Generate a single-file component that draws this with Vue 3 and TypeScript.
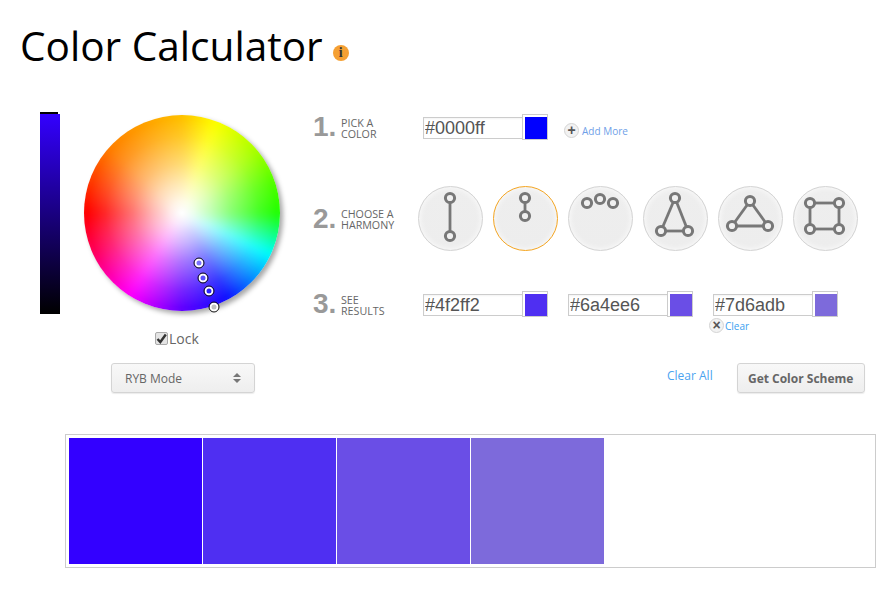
<script setup lang="ts">
interface Node { x: number; y: number }
interface Harmony { name: string; nodes: Node[]; lines: [number, number][] }

const harmonies: Harmony[] = [
  { name: 'complement', nodes: [{ x: 32, y: 12 }, { x: 32, y: 50 }], lines: [[0, 1]] },
  { name: 'monochrome', nodes: [{ x: 32, y: 12 }, { x: 32, y: 30 }], lines: [[0, 1]] },
  { name: 'analogous', nodes: [{ x: 19, y: 17 }, { x: 32, y: 13 }, { x: 45, y: 17 }], lines: [] },
  { name: 'split', nodes: [{ x: 32, y: 12 }, { x: 18, y: 45 }, { x: 45, y: 45 }], lines: [[0, 1], [1, 2], [2, 0]] },
  { name: 'triad', nodes: [{ x: 32, y: 15 }, { x: 14, y: 40 }, { x: 50, y: 40 }], lines: [[0, 1], [1, 2], [2, 0]] },
  { name: 'tetrad', nodes: [{ x: 17, y: 17 }, { x: 46, y: 17 }, { x: 46, y: 43 }, { x: 17, y: 43 }], lines: [[0, 1], [1, 2], [2, 3], [3, 0]] },
]

const results = ['#4f2ff2', '#6a4ee6', '#7d6adb']
const strip = ['#3300ff', '#4f2ff2', '#6a4ee6', '#7d6adb']

const markers = [
  { x: 115, y: 148, inner: '#7a70ff' },
  { x: 119, y: 163, inner: '#5a50ff' },
  { x: 125, y: 176, inner: '#2a20ff' },
  { x: 130, y: 192, inner: '#c0c0c0' },
]
</script>

<template>
  <div class="page">
    <header class="head">
      <h1>Color Calculator</h1>
      <span class="info">i</span>
    </header>

    <section class="tool">
      <div class="left">
        <div class="picker">
          <div class="slider"></div>
          <div class="wheel">
            <div class="face"></div>
            <span
              v-for="m in markers"
              :key="m.y"
              class="marker"
              :style="{ left: m.x + 'px', top: m.y + 'px', background: m.inner }"
            ></span>
          </div>
        </div>
        <div class="lock">
          <span class="check">
            <svg width="11" height="11" viewBox="0 0 11 11"><path d="M1.5 6 L4.3 9 L9.8 1.5" fill="none" stroke="#333" stroke-width="2.4" /></svg>
          </span>
          <span>Lock</span>
        </div>
        <div class="mode">
          <span>RYB Mode</span>
          <svg width="8" height="10" viewBox="0 0 8 10"><path d="M4 0 L8 4 H0 Z M0 6 H8 L4 10 Z" fill="#777" /></svg>
        </div>
      </div>

      <div class="right">
        <div class="step step-one">
          <div class="step-title"><b>1.</b><span>PICK A<br />COLOR</span></div>
          <div class="color-field">
            <input class="hex" value="#0000ff" />
            <span class="chip"><i style="background: #0000ff"></i></span>
          </div>
          <a class="add"><span class="round">+</span>Add More</a>
        </div>

        <div class="step step-two">
          <div class="step-title"><b>2.</b><span>CHOOSE A<br />HARMONY</span></div>
          <div class="harmonies">
            <button
              v-for="(h, i) in harmonies"
              :key="h.name"
              class="harmony"
              :class="{ selected: i === 1 }"
            >
              <svg width="63" height="63" viewBox="1 1 63 63">
                <line
                  v-for="(l, n) in h.lines"
                  :key="n"
                  :x1="h.nodes[l[0]].x"
                  :y1="h.nodes[l[0]].y"
                  :x2="h.nodes[l[1]].x"
                  :y2="h.nodes[l[1]].y"
                  stroke="#777"
                  stroke-width="2.8"
                />
                <circle
                  v-for="(c, n) in h.nodes"
                  :key="n"
                  :cx="c.x"
                  :cy="c.y"
                  r="4.6"
                  fill="#f0f0f0"
                  stroke="#777"
                  stroke-width="3"
                />
              </svg>
            </button>
          </div>
        </div>

        <div class="step step-three">
          <div class="step-title"><b>3.</b><span>SEE<br />RESULTS</span></div>
          <div class="results">
            <div v-for="(r, i) in results" :key="r" class="result">
              <div class="color-field">
                <input class="hex" :value="r" />
                <span class="chip"><i :style="{ background: r }"></i></span>
              </div>
              <a v-if="i === 2" class="clear"><span class="round">×</span>Clear</a>
            </div>
          </div>
        </div>

        <div class="actions">
          <a class="clear-all">Clear All</a>
          <button class="scheme">Get Color Scheme</button>
        </div>
      </div>
    </section>

    <section class="strip">
      <div v-for="c in strip" :key="c" class="swatch" :style="{ background: c }"></div>
    </section>
  </div>
</template>

<style>
html, body {
  margin: 0;
  background: #fff;
}
</style>

<style scoped>
.page {
  width: 892px;
  height: 590px;
  overflow: hidden;
  font-family: "Open Sans", sans-serif;
  color: #666;
}

.head {
  display: flex;
  align-items: center;
  padding-left: 20px;
  height: 92px;
  box-sizing: border-box;
}

h1 {
  margin: 0;
  font-size: 40.6px;
  font-weight: 400;
  line-height: 54px;
  color: #000;
}

.info {
  width: 16px;
  height: 16px;
  margin: 14px 0 0 10px;
  border-radius: 50%;
  background: #f5a033;
  color: #333;
  font: bold 14px/16px "Liberation Serif", serif;
  text-align: center;
}

.tool {
  display: flex;
  height: 342px;
}

.left {
  width: 273px;
  margin-left: 40px;
}

.picker {
  display: flex;
  height: 214px;
  padding-top: 20px;
  box-sizing: border-box;
}

.slider {
  position: relative;
  width: 20px;
  height: 200px;
  margin-top: 2px;
  background: linear-gradient(#3300ff, #000);
}

.slider::before {
  content: "";
  position: absolute;
  left: 0;
  top: -2px;
  width: 18px;
  height: 2px;
  background: #000;
}

.wheel {
  position: relative;
  width: 196px;
  height: 196px;
  margin: 3px 0 0 24px;
  border-radius: 50%;
  box-shadow: 3px 3px 5px rgba(0, 0, 0, 0.35);
}

/* blurred hue ring under the white centre, softens the rays */
.face {
  position: absolute;
  inset: 0;
  overflow: hidden;
  border-radius: 50%;
}

.face::before {
  content: "";
  position: absolute;
  inset: -12px;
  filter: blur(4px);
  background: conic-gradient(#ffc000 0deg, #ffff00 20deg, #a8ff00 50deg, #50ff00 72deg, #22ff00 90deg, #00ffff 115deg, #1010ff 152deg, #6000ff 180deg, #ff00ff 212deg, #ff0060 245deg, #ff0000 270deg, #ff8000 312deg, #ffc000 360deg);
}

.face::after {
  content: "";
  position: absolute;
  inset: 0;
  background: radial-gradient(circle closest-side, #fff 0%, rgba(255, 255, 255, 0.9) 12%, rgba(255, 255, 255, 0.7) 30%, rgba(255, 255, 255, 0.45) 50%, rgba(255, 255, 255, 0.15) 78%, rgba(255, 255, 255, 0) 96%);
}

.marker {
  position: absolute;
  width: 5px;
  height: 5px;
  border-radius: 50%;
  border: 2px solid #fff;
  outline: 1.5px solid #111;
  transform: translate(-50%, -50%);
}

.lock {
  display: flex;
  align-items: center;
  gap: 1px;
  height: 20px;
  margin: 22px 0 0 115px;
  font-size: 14px;
  color: #666;
}

.check {
  display: flex;
  align-items: center;
  justify-content: center;
  width: 11px;
  height: 11px;
  border: 1px solid #aaa;
  border-radius: 2px;
  background: #e4e4e4;
}

.mode {
  display: flex;
  align-items: center;
  justify-content: space-between;
  width: 144px;
  height: 30px;
  margin: 15px 0 0 71px;
  padding: 0 13px;
  box-sizing: border-box;
  border: 1px solid #d4d4d4;
  border-radius: 3px;
  background: linear-gradient(#f8f8f8, #eee);
  box-shadow: 0 1px 1px rgba(0, 0, 0, 0.08);
  font-size: 12px;
  color: #666;
}

.right {
  display: flex;
  flex-direction: column;
  flex: 1;
}

.step {
  display: flex;
}

.step-one {
  align-items: center;
  height: 26px;
  margin-top: 22px;
}

.step-two {
  align-items: center;
  height: 65px;
  margin-top: 46px;
}

.step-three {
  margin-top: 40px;
  height: 72px;
}

.step-title {
  display: flex;
  align-items: center;
  width: 110px;
  height: 26px;
  flex: none;
}

.step-title b {
  width: 28px;
  font-family: "Liberation Sans", sans-serif;
  font-size: 28px;
  font-weight: 700;
  color: #999;
}

.step-title span {
  margin-top: 3px;
  font-size: 10.7px;
  line-height: 11px;
  color: #666;
}

.color-field {
  display: flex;
  align-items: flex-start;
}

.hex {
  width: 100px;
  height: 22px;
  margin-top: 3px;
  padding: 0 0 0 1px;
  box-sizing: border-box;
  border: 1px solid #ccc;
  border-right: 0;
  font-family: "Liberation Sans", sans-serif;
  font-size: 18px;
  color: #555;
  background: #fff;
  outline: none;
  box-shadow: inset 0 1px 2px rgba(0, 0, 0, 0.05);
}

.chip {
  width: 26px;
  height: 26px;
  margin-left: -1px;
  box-sizing: border-box;
  padding: 2px 0 0 2px;
  border: 1px solid #ccc;
  background: #fff;
}

.chip i {
  display: block;
  width: 22px;
  height: 22px;
}

.round {
  display: inline-block;
  width: 15px;
  height: 15px;
  box-sizing: border-box;
  border: 1px solid #d4d4d4;
  border-radius: 50%;
  background: #f2f2f2;
  color: #555;
  font: bold 14px/12px "Liberation Sans", sans-serif;
  text-align: center;
}

.add {
  display: flex;
  align-items: center;
  gap: 3px;
  margin: 7px 0 0 16px;
  font-size: 10px;
  color: #6f9fe8;
}

.harmonies {
  display: flex;
  gap: 10px;
  margin-left: -5px;
}

.harmony {
  display: flex;
  width: 65px;
  height: 65px;
  padding: 0;
  border: 1px solid #d4d4d4;
  border-radius: 50%;
  background: linear-gradient(#eee, #ededed);
  box-shadow: inset 0 0 6px rgba(255, 255, 255, 0.9);
}

.harmony.selected {
  border-color: #f5a623;
}

.results {
  display: flex;
  gap: 20px;
}

.result {
  display: flex;
  flex-direction: column;
}

.clear {
  display: flex;
  align-items: center;
  gap: 1px;
  margin: 1px 0 0 -4px;
  font-size: 10px;
  color: #3aa0f0;
}

.actions {
  display: flex;
  align-items: center;
  height: 30px;
}

.clear-all {
  margin: -6px 0 0 354px;
  font-size: 12px;
  color: #4aa3f0;
}

.scheme {
  width: 128px;
  height: 30px;
  margin-left: 24px;
  padding: 0;
  border: 1px solid #d4d4d4;
  border-radius: 3px;
  background: linear-gradient(#f8f8f8, #eee);
  box-shadow: 0 1px 1px rgba(0, 0, 0, 0.08);
  font-family: "Open Sans", sans-serif;
  font-size: 12px;
  font-weight: 700;
  color: #666;
}

.strip {
  display: flex;
  gap: 1px;
  width: 811px;
  height: 134px;
  margin-left: 65px;
  padding: 3px;
  box-sizing: border-box;
  border: 1px solid #ccc;
}

.swatch {
  width: 133px;
  height: 126px;
}
</style>
